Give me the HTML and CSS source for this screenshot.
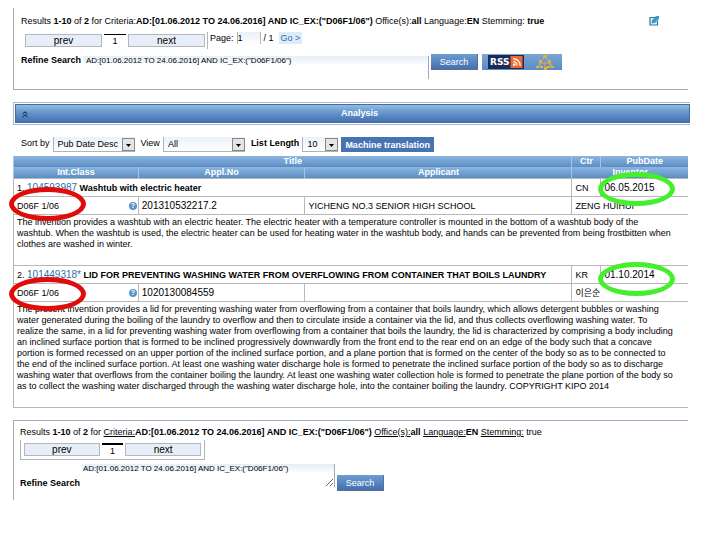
FILE: index.html
```
<!DOCTYPE html>
<html lang="en">

<head>
    <meta charset="utf-8">
    <link rel="stylesheet" href="styles.css">
    <title>Results</title>
</head>

<body>
    <form class="panel panel-top">
        <div class="criteria">
            <span>Results <b>1-10</b> of <b>2</b> for Criteria:<b>AD:[01.06.2012 TO 24.06.2016] AND IC_EX:("D06F1/06")</b> Office(s):<b>all</b> Language:<b>EN</b> Stemming: <b>true</b></span>
            <a href="#" class="edit" aria-label="Edit query">
                <svg width="10" height="10" viewBox="0 0 10 10">
                    <path d="M7 1.5H1v7.5h7.5V5" fill="#e8f4fa" stroke="#36719c" stroke-width="1.2" />
                    <path d="M2.500 7.500l.5-3.500L7 0l3 0v3L6 7z" fill="#3d9cc8" />
                </svg>
            </a>
        </div>
        <div class="pager">
            <button type="button" class="page-btn">prev</button>
            <span class="current">1</span>
            <button type="button" class="page-btn">next</button>
            <div class="goto">
                <label for="page">Page:</label>
                <input id="page" class="page-input" type="text" value="1">
                <span>/ 1</span>
                <button type="button" class="go">Go &gt;</button>
            </div>
        </div>
        <div class="refine">
            <label class="refine-label" for="query">Refine Search</label>
            <textarea id="query" class="query query-wide">AD:[01.06.2012 TO 24.06.2016] AND IC_EX:("D06F1/06")</textarea>
            <button type="button" class="search">Search</button>
            <div class="feeds">
                <a href="#" class="rss">RSS<svg width="13" height="12" viewBox="0 0 13 13">
                        <rect width="13" height="13" fill="#ee6a26" />
                        <circle cx="4" cy="9.500" r="1.300" fill="#fff" />
                        <path d="M3 6.200a4 4 0 0 1 4 4M3 3a7.500 7.500 0 0 1 7.500 7.500" fill="none" stroke="#fff" stroke-width="1.400" />
                    </svg></a>
                <a href="#" aria-label="Tree">
                    <svg width="18" height="15" viewBox="0 0 18 15">
                        <path d="M9 2L4 7v5M9 2l5 5v5M4 7l-2 5M14 7l2 5M4 8h10M9 8v5" fill="none" stroke="#cfae5a" stroke-width="1" />
                        <g fill="#e8b238">
                            <rect x="7" y="0" width="4" height="3" />
                            <rect x="3" y="5" width="3" height="3" />
                            <rect x="12" y="5" width="3" height="3" />
                            <rect x="0" y="11" width="3" height="2" />
                            <rect x="4" y="11" width="3" height="2" />
                            <rect x="8" y="12" width="3" height="3" />
                            <rect x="11" y="11" width="3" height="2" />
                            <rect x="15" y="11" width="3" height="2" />
                        </g>
                    </svg>
                </a>
            </div>
        </div>
    </form>

    <div class="analysis">
        <button type="button" class="analysis-bar">
            <svg class="chevron" width="6" height="7" viewBox="0 0 6 7">
                <path d="M.5 3L3 .8 5.500 3M.5 6L3 3.800 5.500 6" fill="none" stroke="#061238" />
            </svg>
            Analysis
        </button>
    </div>

    <form class="options">
        <label for="sort">Sort by</label>
        <select id="sort" class="pick pick-wide">
            <option>Pub Date Desc</option>
        </select>
        <label for="view" class="spaced">View</label>
        <select id="view" class="pick pick-wide">
            <option>All</option>
        </select>
        <label for="length" class="spaced"><b>List Length</b></label>
        <select id="length" class="pick">
            <option>10</option>
        </select>
        <button type="button" class="translate">Machine translation</button>
    </form>

    <div class="results-wrap">
        <table class="results">
            <colgroup>
                <col class="c-class">
                <col class="c-appl">
                <col class="c-applicant">
                <col class="c-ctr">
                <col class="c-date">
            </colgroup>
            <thead>
                <tr>
                    <th colspan="3">Title</th>
                    <th>Ctr</th>
                    <th>PubDate</th>
                </tr>
                <tr>
                    <th>Int.Class</th>
                    <th>Appl.No</th>
                    <th>Applicant</th>
                    <th colspan="2">Inventor</th>
                </tr>
            </thead>
            <tbody>
                <tr>
                    <td colspan="3">1. <a href="#" class="number">104593987</a> <b>Washtub with electric heater</b></td>
                    <td>CN</td>
                    <td class="number">06.05.2015</td>
                </tr>
                <tr>
                    <td><div class="ipc">D06F 1/06 <i class="help">?</i></div></td>
                    <td class="number">201310532217.2</td>
                    <td>YICHENG NO.3 SENIOR HIGH SCHOOL</td>
                    <td colspan="2">ZENG HUIHUI</td>
                </tr>
                <tr>
                    <td colspan="5" class="abstract">The invention provides a washtub with an electric heater. The electric heater with a temperature controller is mounted in the bottom of a washtub body of the<br>
                        washtub. When the washtub is used, the electric heater can be used for heating water in the washtub body, and hands can be prevented from being frostbitten when<br>
                        clothes are washed in winter.</td>
                </tr>
                <tr>
                    <td colspan="3">2. <a href="#" class="number">101449318*</a> <b>LID FOR PREVENTING WASHING WATER FROM OVERFLOWING FROM CONTAINER THAT BOILS LAUNDRY</b></td>
                    <td>KR</td>
                    <td class="number">01.10.2014</td>
                </tr>
                <tr>
                    <td><div class="ipc">D06F 1/06 <i class="help">?</i></div></td>
                    <td class="number">1020130084559</td>
                    <td></td>
                    <td colspan="2">이은순</td>
                </tr>
                <tr>
                    <td colspan="5" class="abstract">The present invention provides a lid for preventing washing water from overflowing from a container that boils laundry, which allows detergent bubbles or washing<br>
                        water generated during the boiling of the laundry to overflow and then to circulate inside a container via the lid, and thus collects overflowing washing water. To<br>
                        realize the same, in a lid for preventing washing water from overflowing from a container that boils the laundry, the lid is characterized by comprising a body including<br>
                        an inclined surface portion that is formed to be inclined progressively downwardly from the front end to the rear end on an edge of the body such that a concave<br>
                        portion is formed recessed on an upper portion of the inclined surface portion, and a plane portion that is formed on the center of the body so as to be connected to<br>
                        the end of the inclined surface portion. At least one washing water discharge hole is formed to penetrate the inclined surface portion of the body so as to discharge<br>
                        washing water that overflows from the container boiling the laundry. At least one washing water collection hole is formed to penetrate the plane portion of the body so<br>
                        as to collect the washing water discharged through the washing water discharge hole, into the container boiling the laundry. COPYRIGHT KIPO 2014</td>
                </tr>
            </tbody>
        </table>
        <span class="ring ring-red ring-class-1"></span>
        <span class="ring ring-red ring-class-2"></span>
        <span class="ring ring-green ring-date-1"></span>
        <span class="ring ring-green ring-date-2"></span>
    </div>

    <form class="panel panel-bottom">
        <div class="criteria">
            <span>Results <b>1-10</b> of <b>2</b> for <u>Criteria:</u><b>AD:[01.06.2012 TO 24.06.2016] AND IC_EX:("D06F1/06")</b> <u>Office(s):</u><b>all</b> <u>Language:</u><b>EN</b> <u>Stemming:</u> true</span>
        </div>
        <div class="pager pager-boxed">
            <button type="button" class="page-btn">prev</button>
            <span class="current">1</span>
            <button type="button" class="page-btn">next</button>
        </div>
        <div class="refine refine-bottom">
            <label class="refine-label" for="query2">Refine Search</label>
            <textarea id="query2" class="query query-short">AD:[01.06.2012 TO 24.06.2016] AND IC_EX:("D06F1/06")</textarea>
            <button type="button" class="search">Search</button>
        </div>
    </form>
</body>

</html>
```
FILE: styles.css
```
* {
    box-sizing: border-box;
}

body {
    margin: 0;
    padding: 8px 30px 0 13px;
    background: #fff;
    color: #000;
    font: 9px/12px "Liberation Sans", Arial, "Noto Sans CJK KR", sans-serif;
}

button,
input,
select,
textarea {
    margin: 0;
    padding: 0;
    border: 0;
    border-radius: 0;
    color: inherit;
    font: inherit;
}

a {
    color: #2f6ea8;
    text-decoration: none;
}

.panel {
    margin-right: 2px;
    padding-left: 7px;
    border-left: 1px solid #9eabba;
    white-space: nowrap;
}

.panel-top {
    height: 82px;
    padding-top: 7px;
    border-bottom: 1px solid #9eabba;
}

.panel-bottom {
    height: 80px;
    margin-top: 12px;
    padding: 5px 0 0 6px;
    border-top: 1px solid #9eabc4;
}

.criteria {
    display: flex;
    justify-content: space-between;
    height: 17px;
}

.panel-bottom .criteria {
    height: 14px;
}

.edit {
    margin: 1px 29px 0 0;
}

.edit svg {
    display: block;
}

/* pager */

.pager {
    display: flex;
    gap: 2px;
    padding: 2px 0 0 4px;
}

.page-btn {
    width: 77px;
    height: 13px;
    background: #e8eef8;
    border: 1px solid #b4b8be;
    font-size: 10px;
    line-height: 11px;
}

.current {
    width: 22px;
    height: 13px;
    border-top: 1px solid #000;
    text-align: center;
}

.goto {
    display: flex;
    gap: 3px;
    height: 17px;
    margin-top: -2px;
    padding-left: 2px;
    border-left: 1px solid #b4b4b4;
}

.page-input {
    width: 24px;
    height: 12px;
    background: linear-gradient(#e8f0f8, #fff);
    border: solid #b4b4b4;
    border-width: 0 1px;
}

.go {
    height: 12px;
    margin-left: 2px;
    padding: 0 2px;
    background: #dcecfa;
    color: #2f6ea8;
}

.pager-boxed {
    width: 185px;
    height: 20px;
    padding: 3px;
    border: solid #b4b4b4;
    border-width: 0 1px 1px;
}

.pager-boxed .current {
    border-top-width: 2px;
}

/* refine search */

.refine {
    display: flex;
    height: 25px;
    margin-top: 4px;
}

.refine-label {
    width: 62px;
    margin-top: 1px;
    font-weight: bold;
}

.query {
    height: 23px;
    margin: 3px 2px 0 0;
    padding-left: 3px;
    background: linear-gradient(#e6eef6, #fff 10px);
    border-right: 1px solid #a8a8b0;
    font-size: 8px;
    line-height: 10px;
    overflow: hidden;
}

.query-wide {
    width: 346px;
    resize: none;
}

.query-short {
    width: 253px;
    margin-top: 0;
    padding-left: 1px;
}

.search {
    width: 47px;
    height: 16px;
    margin-top: 1px;
    background: linear-gradient(#6d9dd0, #4470b0);
    border: solid #5a6f92;
    border-width: 0 1px 1px 0;
    color: #fff;
}

.feeds {
    display: flex;
    align-items: center;
    gap: 12px;
    width: 80px;
    height: 16px;
    margin: 1px 0 0 4px;
    padding-left: 6px;
    background: linear-gradient(#7aa6d4, #5b8ac4);
}

.feeds svg {
    display: block;
}

.rss {
    display: flex;
    align-items: center;
    height: 14px;
    padding-left: 1px;
    background: #1d2b58;
    border: 1px solid #1d2b58;
    color: #fff;
    font: bold 9px/12px "DejaVu Sans", sans-serif;
}

.refine-bottom {
    margin-top: 4px;
}

.refine-bottom .refine-label {
    margin-top: 13px;
}

.refine-bottom .search {
    margin-top: 11px;
}

/* analysis bar */

.analysis {
    margin-top: 12px;
    padding: 1px 0 1px 1px;
    border: solid #aab8d0;
    border-width: 1px 0 1px 1px;
}

.analysis-bar {
    display: block;
    position: relative;
    width: 100%;
    height: 19px;
    padding: 0 0 2px 14px;
    background: linear-gradient(#8fbce2, #6292ca 50%, #4470b0);
    border: 1px solid #4a6a98;
    color: #fff;
    font-weight: bold;
}

.chevron {
    position: absolute;
    left: 6px;
    top: 6px;
}

/* sort, view and length */

.options {
    display: flex;
    gap: 3px;
    height: 31px;
    padding: 12px 0 0 8px;
    white-space: nowrap;
}

.pick {
    appearance: none;
    width: 36px;
    height: 15px;
    padding: 0 14px 0 4px;
    background: url("data:image/svg+xml,%3Csvg xmlns='http://www.w3.org/2000/svg' width='13' height='13'%3E%3Crect x='.5' y='.5' width='12' height='12' fill='%23e4e4e4' stroke='%23888'/%3E%3Cpath d='M4 6h5L6.500 9z'/%3E%3C/svg%3E") right bottom no-repeat, linear-gradient(#eaf2fa, #fff);
    border: solid #b0b4ba;
    border-width: 0 0 1px 1px;
}

.pick-wide {
    width: 82px;
}

.spaced {
    margin-left: 3px;
}

.translate {
    height: 15px;
    padding: 0 4px;
    background: #4674b2;
    color: #fff;
    font-weight: bold;
}

/* result table */

.results-wrap {
    position: relative;
    margin-right: 2px;
}

.results {
    width: 100%;
    border-collapse: collapse;
    table-layout: fixed;
    white-space: nowrap;
}

.c-class {
    width: 18.5%;
}

.c-appl {
    width: 24.7%;
}

.c-applicant {
    width: 39.6%;
}

.c-ctr {
    width: 4.3%;
}

.results th {
    height: 11px;
    padding: 0;
    background: linear-gradient(#8ab6de, #5c8cc4);
    border-left: 1px solid #a8c4e2;
    color: #fff;
    line-height: 11px;
}

.results td {
    height: 18px;
    padding: 0 3px;
    border: 1px solid #b8b8b8;
    border-right: 0;
}

.results .number {
    font-size: 10px;
}

.results .abstract {
    padding: 2px 3px 15px;
    line-height: 11px;
}

.ipc {
    display: flex;
    justify-content: space-between;
    align-items: center;
}

.help {
    width: 8px;
    height: 8px;
    margin-right: -2px;
    border-radius: 4px;
    background: #5c94c8;
    color: #fff;
    font: bold 7px/8px "Liberation Sans", sans-serif;
    text-align: center;
}

/* marks drawn over the table */

.ring {
    position: absolute;
    width: 77px;
    height: 34px;
    border: 5px solid;
    border-radius: 50%;
}

.ring-red {
    left: -4px;
    border-color: #e00c0c;
}

.ring-green {
    right: 13px;
    border-color: #44f02c;
}

.ring-class-1 {
    top: 31px;
}

.ring-class-2 {
    top: 121px;
}

.ring-date-1 {
    top: 16px;
}

.ring-date-2 {
    top: 106px;
}
```
